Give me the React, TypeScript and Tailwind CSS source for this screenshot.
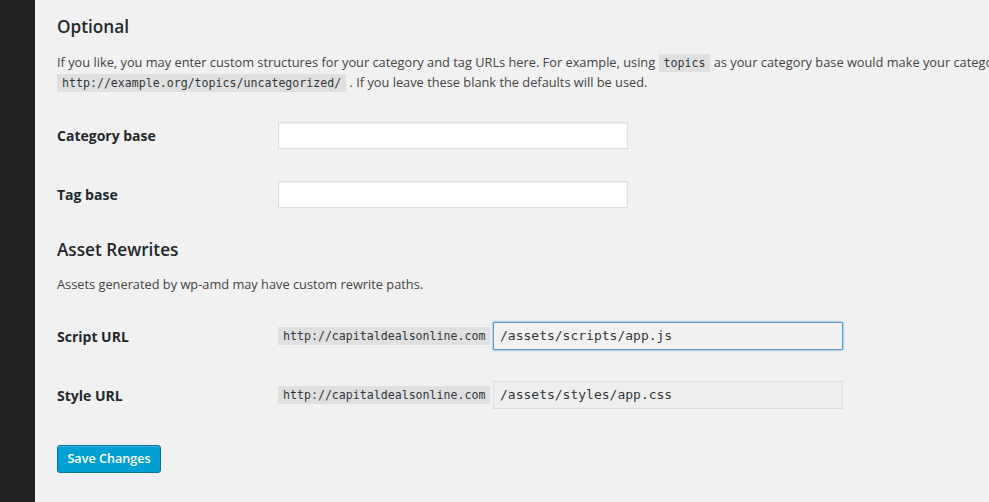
import React from "react";

const sans = { fontFamily: '"Open Sans", "Noto Sans", sans-serif' };

function Code({ children, className = "" }: { children: React.ReactNode; className?: string }) {
  return (
    <code
      className={`inline-block bg-[#e0e0e0] px-[5px] text-[11.6px] leading-[18px] text-[#32373c] ${className}`}
      style={{ fontFamily: '"DejaVu Sans Mono", "Liberation Mono", monospace' }}
    >
      {children}
    </code>
  );
}

export default function App() {
  return (
    <div className="flex h-[502px] w-[989px] overflow-hidden bg-[#f1f1f1]" style={sans}>
      <div className="w-[35px] shrink-0 bg-[#222]" />
      <div className="shrink-0 pl-[22px] text-[12.8px] text-[#444]">
        <h3 className="mt-[15px] h-[24px] text-[17.2px] font-semibold leading-[24px] text-[#23282d]">Optional</h3>
        <p className="mt-[13px] whitespace-nowrap leading-[20px]">
          If you like, you may enter custom structures for your category and tag URLs here. For example, using{" "}
          <Code>topics</Code> as your category base would make your category links like
          <br />
          <Code>http://example.org/topics/uncategorized/</Code> . If you leave these blank the defaults will be used.
        </p>

        <div className="mt-[30px] flex items-center">
          <div className="w-[221px] text-[14px] font-bold text-[#23282d]">Category base</div>
          <div className="h-[27px] w-[350px] border border-[#ddd] bg-white shadow-[inset_0_1px_2px_rgba(0,0,0,0.07)]" />
        </div>
        <div className="mt-[32px] flex items-center">
          <div className="w-[221px] text-[14px] font-bold text-[#23282d]">Tag base</div>
          <div className="h-[27px] w-[350px] border border-[#ddd] bg-white shadow-[inset_0_1px_2px_rgba(0,0,0,0.07)]" />
        </div>

        <h3 className="mt-[30px] h-[24px] text-[17.2px] font-semibold leading-[24px] text-[#23282d]">Asset Rewrites</h3>
        <p className="mt-[12px] leading-[20px]">Assets generated by wp-amd may have custom rewrite paths.</p>

        <div className="mt-[28px] flex items-center">
          <div className="w-[221px] text-[14px] font-bold text-[#23282d]">Script URL</div>
          <Code className="w-[212px]">http://capitaldealsonline.com</Code>
          <div
            className="ml-[3px] flex h-[28px] w-[350px] items-center border border-[#5b9dd9] bg-[#f1f1f1] px-[6px] text-[13px] text-[#32373c] shadow-[0_0_2px_rgba(30,140,190,0.8)]"
            style={{ fontFamily: '"DejaVu Sans Mono", "Liberation Mono", monospace' }}
          >
            /assets/scripts/app.js
          </div>
        </div>
        <div className="mt-[31px] flex items-center">
          <div className="w-[221px] text-[14px] font-bold text-[#23282d]">Style URL</div>
          <Code className="w-[212px]">http://capitaldealsonline.com</Code>
          <div
            className="ml-[3px] flex h-[28px] w-[350px] items-center border border-[#ddd] bg-[#eeeeee] px-[6px] text-[13px] text-[#32373c]"
            style={{ fontFamily: '"DejaVu Sans Mono", "Liberation Mono", monospace' }}
          >
            /assets/styles/app.css
          </div>
        </div>

        <button className="mt-[36px] flex h-[28px] w-[104px] items-center justify-center rounded-[3px] border border-[#0073aa] bg-[#00a0d2] text-[12.6px] font-semibold text-white shadow-[inset_0_1px_0_rgba(120,200,230,0.5)]">
          Save Changes
        </button>
      </div>
    </div>
  );
}
